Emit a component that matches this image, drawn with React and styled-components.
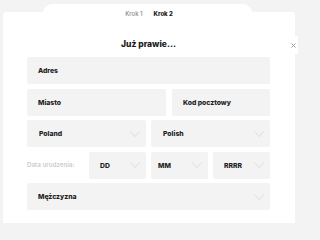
import React from 'react';
import styled, { createGlobalStyle } from 'styled-components';

const GlobalStyle = createGlobalStyle`
  html, body {
    margin: 0;
    padding: 0;
    background: #f3f3f3;
  }
  body {
    font-family: Inter, "Open Sans", "Liberation Sans", sans-serif;
  }
`;

const Page = styled.div`
  position: relative;
  width: 300px;
  height: 223px;
  padding-top: 4px;
  box-sizing: border-box;
  overflow: hidden;
`;

const Steps = styled.div`
  position: relative;
  z-index: 1;
  width: 209px;
  height: 18px;
  margin: 0 0 -10px 43px;
  border-radius: 9px;
  background: #fff;
  display: flex;
  align-items: center;
  justify-content: center;
  gap: 8px;
`;

const Step = styled.span`
  font-size: 6px;
  font-weight: ${p => (p.$active ? 800 : 500)};
  color: ${p => (p.$active ? '#1a1a1a' : '#8a8a8a')};
  margin-left: 3px;
`;

const Card = styled.div`
  margin: 0 5px 0 3px;
  height: 230px;
  background: #fff;
  border-radius: 3px 3px 0 0;
  padding: 26px 25px 0 24px;
  box-sizing: border-box;
`;

const Title = styled.h2`
  margin: 0 0 7px;
  font-size: 8.5px;
  line-height: 12px;
  font-weight: 800;
  color: #1a1a1a;
  text-align: center;
`;

const Form = styled.div`
  display: flex;
  flex-direction: column;
  gap: 4.5px;
`;

const Row = styled.div`
  display: grid;
  grid-template-columns: ${p => p.$cols || '1fr'};
  gap: ${p => p.$gap || 5}px;
`;

const Field = styled.div`
  height: 27px;
  background: #f3f3f3;
  border-radius: 2px;
  display: flex;
  align-items: center;
  justify-content: space-between;
  padding: 0 6px 0 ${p => p.$pad || 11}px;
  box-sizing: border-box;
  font-size: 6.8px;
  font-weight: 800;
  color: #1e1e1e;
  grid-column: ${p => p.$span || 'auto'};
`;

const Label = styled.div`
  display: flex;
  align-items: center;
  font-size: 6.3px;
  font-weight: 500;
  color: #c6c6c6;
  white-space: nowrap;
`;

const Close = styled.button`
  position: absolute;
  top: 36px;
  right: 2px;
  width: 9px;
  height: 18px;
  padding: 0;
  border: none;
  background: #fff;
  display: flex;
  align-items: center;
  justify-content: center;
`;

const Chevron = () => (
  <svg width="10" height="6" viewBox="0 0 10 6">
    <polyline points="0.5,0.5 5,5.5 9.5,0.5" fill="none" stroke="#d6d6d6" strokeWidth="0.8" />
  </svg>
);

const Select = ({ children, pad, span }) => (
  <Field $pad={pad} $span={span}>
    <span>{children}</span>
    <Chevron />
  </Field>
);

export default function App() {
  return (
    <>
      <GlobalStyle />
      <Page>
        <Steps>
          <Step>Krok 1</Step>
          <Step $active>Krok 2</Step>
        </Steps>
        <Card>
          <Title>Już prawie...</Title>
          <Form>
            <Field>Adres</Field>
            <Row $cols="139fr 98fr" $gap={6}>
              <Field>Miasto</Field>
              <Field>Kod pocztowy</Field>
            </Row>
            <Row $cols="repeat(4, 1fr)">
              <Select pad={12} span="span 2">Poland</Select>
              <Select pad={12} span="span 2">Polish</Select>
            </Row>
            <Row $cols="repeat(4, 1fr)">
              <Label>Data urodzenia:</Label>
              <Select>DD</Select>
              <Select pad={7}>MM</Select>
              <Select>RRRR</Select>
            </Row>
            <Select>Mężczyzna</Select>
          </Form>
        </Card>
        <Close aria-label="Zamknij">
          <svg width="5" height="5" viewBox="0 0 5 5">
            <path d="M0.5 0.5 L4.5 4.5 M4.5 0.5 L0.5 4.5" stroke="#9a9a9a" strokeWidth="1" />
          </svg>
        </Close>
      </Page>
    </>
  );
}
